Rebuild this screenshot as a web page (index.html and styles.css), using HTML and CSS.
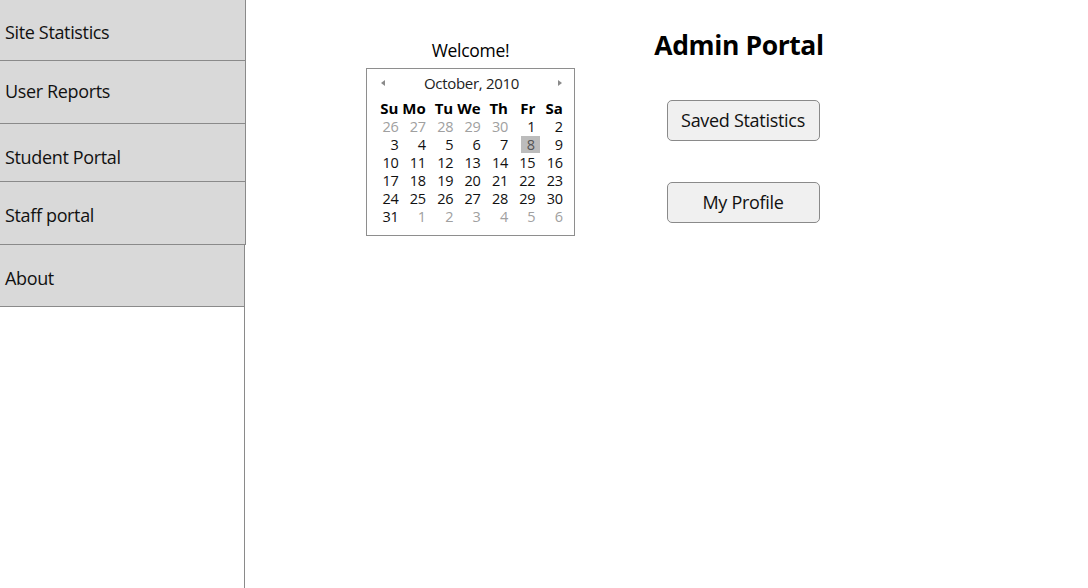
FILE: index.html
```html
<!DOCTYPE html>
<html>
<head>
<meta charset="utf-8">
<link rel="stylesheet" href="styles.css">
</head>
<body>
<div class="app">
  <nav class="sidebar">
    <div class="nav-item item-1">Site Statistics</div>
    <div class="nav-item item-2">User Reports</div>
    <div class="nav-item item-3">Student Portal</div>
    <div class="nav-item item-4">Staff portal</div>
    <div class="nav-item item-5">About</div>
  </nav>
  <main class="content">
    <section class="welcome">
      <div class="welcome-title">Welcome!</div>
      <div class="calendar">
        <div class="cal-head">
          <span class="arrow arrow-left"></span>
          <span class="month">October, 2010</span>
          <span class="arrow arrow-right"></span>
        </div>
        <div class="cal-grid">
          <span class="dow">Su</span><span class="dow">Mo</span><span class="dow">Tu</span><span class="dow">We</span><span class="dow">Th</span><span class="dow">Fr</span><span class="dow">Sa</span>
          <span class="day other">26</span><span class="day other">27</span><span class="day other">28</span><span class="day other">29</span><span class="day other">30</span><span class="day">1</span><span class="day">2</span>
          <span class="day">3</span><span class="day">4</span><span class="day">5</span><span class="day">6</span><span class="day">7</span><span class="day"><span class="today">8</span></span><span class="day">9</span>
          <span class="day">10</span><span class="day">11</span><span class="day">12</span><span class="day">13</span><span class="day">14</span><span class="day">15</span><span class="day">16</span>
          <span class="day">17</span><span class="day">18</span><span class="day">19</span><span class="day">20</span><span class="day">21</span><span class="day">22</span><span class="day">23</span>
          <span class="day">24</span><span class="day">25</span><span class="day">26</span><span class="day">27</span><span class="day">28</span><span class="day">29</span><span class="day">30</span>
          <span class="day">31</span><span class="day other">1</span><span class="day other">2</span><span class="day other">3</span><span class="day other">4</span><span class="day other">5</span><span class="day other">6</span>
        </div>
      </div>
    </section>
    <section class="admin">
      <h1 class="admin-title">Admin Portal</h1>
      <button class="btn btn-first">Saved Statistics</button>
      <button class="btn">My Profile</button>
    </section>
  </main>
</div>
</body>
</html>
```
FILE: styles.css
```css
* { box-sizing: border-box; }
html, body { margin: 0; padding: 0; background: #fff; }
body {
  font-family: "Open Sans", "Noto Sans", "DejaVu Sans", sans-serif;
  color: #000;
  width: 1088px;
  height: 588px;
  overflow: hidden;
}
.app { display: flex; height: 588px; }

.sidebar {
  width: 245px;
  height: 588px;
  border-right: 1px solid #8a8a8a;
  display: flex;
  flex-direction: column;
  flex: none;
}
.nav-item {
  background: #d9d9d9;
  border-bottom: 1px solid #8a8a8a;
  font-size: 18px;
  letter-spacing: -0.35px;
  color: #111;
  padding-left: 5px;
  display: flex;
  align-items: center;
}
.item-1, .item-2, .item-3, .item-4 {
  margin-right: -2px;
  border-right: 1px solid #8a8a8a;
}
.item-1 { height: 61px; padding-top: 4px; }
.item-2 { height: 63px; padding-bottom: 2px; }
.item-3 { height: 58px; padding-top: 8px; }
.item-4 { height: 63px; padding-top: 4px; }
.item-5 { height: 62px; padding-top: 4px; }

.content {
  flex: 1;
  display: flex;
  align-items: flex-start;
  padding-left: 121px;
}
.welcome {
  width: 209px;
  padding-top: 38px;
  display: flex;
  flex-direction: column;
  align-items: center;
}
.welcome-title {
  font-size: 17.5px;
  letter-spacing: -0.3px;
  line-height: 24px;
  height: 30px;
}
.calendar {
  width: 209px;
  height: 168px;
  border: 1px solid #8e8e8e;
  padding: 1px 0 0 4px;
}
.cal-head {
  height: 26px;
  display: flex;
  align-items: center;
  justify-content: space-between;
  padding: 0 12px 0 10px;
}
.month {
  font-size: 15px;
  letter-spacing: -0.3px;
  color: #222;
}
.arrow {
  width: 0; height: 0;
  border-top: 3.5px solid transparent;
  border-bottom: 3.5px solid transparent;
}
.arrow-left { border-right: 4px solid #8a8a8a; }
.arrow-right { border-left: 4px solid #8a8a8a; }

.cal-grid {
  margin-top: 3px;
  display: grid;
  grid-template-columns: repeat(7, 27.4px);
  grid-auto-rows: 18px;
  font-size: 14.5px;
  letter-spacing: -0.3px;
  line-height: 18px;
}
.dow { font-weight: 700; text-align: right; font-size: 15px; letter-spacing: 0; }
.day { text-align: right; color: #111; padding-top: 1px; }
.day.other { color: #a0a0a0; }
.today {
  display: inline-block;
  width: 19px;
  height: 17px;
  background: #bcbcbc;
  color: #555;
  text-align: center;
  margin-right: -5px;
  margin-top: -1px;
  padding-right: 0;
  line-height: 17px;
}

.admin {
  margin-left: 77px;
  display: flex;
  flex-direction: column;
  align-items: center;
  width: 174px;
}
.admin-title {
  margin: 28px 0 0 0;
  font-size: 26.5px;
  font-weight: 700;
  letter-spacing: -0.4px;
  line-height: 34px;
  white-space: nowrap;
}
.btn {
  width: 153px;
  height: 41px;
  background: #f0f0f0;
  border: 1px solid #8a8a8a;
  border-radius: 5px;
  font-family: inherit;
  font-size: 18px;
  letter-spacing: -0.3px;
  color: #111;
  padding: 0 0 2px 0;
  margin-left: 8px;
}
.btn-first { margin-top: 38px; }
.btn + .btn { margin-top: 41px; }
```
